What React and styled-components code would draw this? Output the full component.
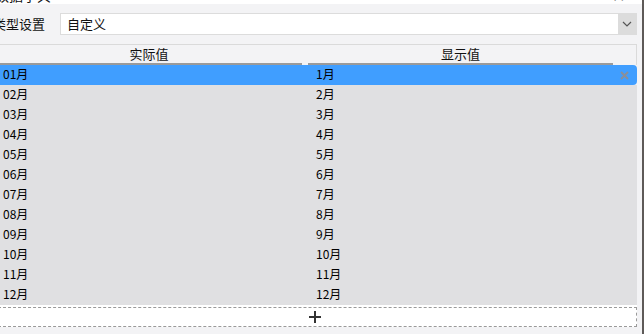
import styled, { createGlobalStyle } from "styled-components";

const GlobalStyle = createGlobalStyle`
    html, body {
        margin: 0;
        padding: 0;
        background: #5e5a58;
        overflow: hidden;
    }
    * {
        box-sizing: border-box;
    }
`;

const Dialog = styled.div`
    margin-left: -7px;
    width: 649px;
    height: 334px;
    padding-right: 5px;
    background: #f3f3f5;
    font-family: "Noto Sans CJK SC", "Liberation Sans", sans-serif;
    color: #111;
    overflow: hidden;
`;

const TitleBar = styled.div`
    margin-top: -14px;
    height: 18px;
    margin-right: -5px;
    background: #fff;
    display: flex;
    justify-content: space-between;
    align-items: center;
    padding: 0 17px 0 2px;
    font-size: 14px;
    line-height: 18px;
`;

const Close = styled.span`
    font-size: 16px;
    color: #333;
`;

const FormRow = styled.div`
    margin-top: 9px;
    height: 22px;
    display: flex;
    align-items: center;
`;

const Label = styled.div`
    width: 67px;
    font-size: 13px;
    line-height: 22px;
`;

const Select = styled.div`
    flex: 1;
    height: 22px;
    display: flex;
    background: #fff;
    border: 1px solid #dcdcdc;
`;

const SelectText = styled.div`
    flex: 1;
    padding-left: 6px;
    font-size: 13px;
    line-height: 20px;
`;

const Arrow = styled.div`
    width: 18px;
    background: #dcdcdc;
    display: flex;
    align-items: center;
    justify-content: center;
`;

const Table = styled.div`
    margin-top: 9px;
`;

const HeaderRow = styled.div`
    display: grid;
    grid-template-columns: 312px 311px 1fr;
    height: 21px;
    border-top: 1px solid #dadada;
    border-right: 1px solid #dadada;
`;

const HeaderCell = styled.div`
    margin: 0 3px;
    border-bottom: ${({ $line }) => ($line ? "2px solid #9a9a9a" : "none")};
    text-align: center;
    font-size: 13px;
    line-height: 18px;
`;

const Row = styled.div`
    display: grid;
    grid-template-columns: 312px 311px 1fr;
    height: 20px;
    background: ${({ $active }) => ($active ? "#409eff" : "#e0e0e2")};
    border-radius: ${({ $active }) => ($active ? "0 4px 4px 0" : "0")};
    font-family: "SimSun", "Noto Sans CJK SC", sans-serif;
    font-size: 12px;
    line-height: 18px;
    color: #000;
`;

const Cell = styled.div`
    padding-left: ${({ $pad }) => $pad}px;
    white-space: nowrap;
`;

const Remove = styled.div`
    display: flex;
    align-items: center;
    justify-content: center;
    padding-right: 4px;
`;

const AddWrap = styled.div`
    background: #fff;
    padding-top: 2px;
`;

const AddBox = styled.div`
    height: 20px;
    border: 1px dashed #9a9a9a;
    display: flex;
    align-items: center;
    justify-content: center;
`;

const months = ["01", "02", "03", "04", "05", "06", "07", "08", "09", "10", "11", "12"];

const App = () => {
    return (
        <>
            <GlobalStyle />
            <Dialog>
                <TitleBar>
                    <span>数据字典</span>
                    <Close>✕</Close>
                </TitleBar>
                <FormRow>
                    <Label>类型设置</Label>
                    <Select>
                        <SelectText>自定义</SelectText>
                        <Arrow>
                            <svg width="10" height="6" viewBox="0 0 10 6">
                                <path d="M1 1l4 4 4-4" fill="none" stroke="#555" strokeWidth="1.2" />
                            </svg>
                        </Arrow>
                    </Select>
                </FormRow>
                <Table>
                    <HeaderRow>
                        <HeaderCell $line>实际值</HeaderCell>
                        <HeaderCell $line>显示值</HeaderCell>
                        <HeaderCell />
                    </HeaderRow>
                    {months.map((m, i) => (
                        <Row key={m} $active={i === 0}>
                            <Cell $pad={10}>{m}月</Cell>
                            <Cell $pad={11}>{i + 1}月</Cell>
                            {i === 0 ? (
                                <Remove>
                                    <svg width="9" height="9" viewBox="0 0 9 9">
                                        <path d="M1 1l7 7M8 1l-7 7" stroke="#8a8f99" strokeWidth="2" />
                                    </svg>
                                </Remove>
                            ) : (
                                <div />
                            )}
                        </Row>
                    ))}
                    <AddWrap>
                        <AddBox>
                            <svg width="12" height="12" viewBox="0 0 12 12">
                                <path d="M6 0v12M0 6h12" stroke="#333" strokeWidth="2" />
                            </svg>
                        </AddBox>
                    </AddWrap>
                </Table>
            </Dialog>
        </>
    );
};

export default App;
